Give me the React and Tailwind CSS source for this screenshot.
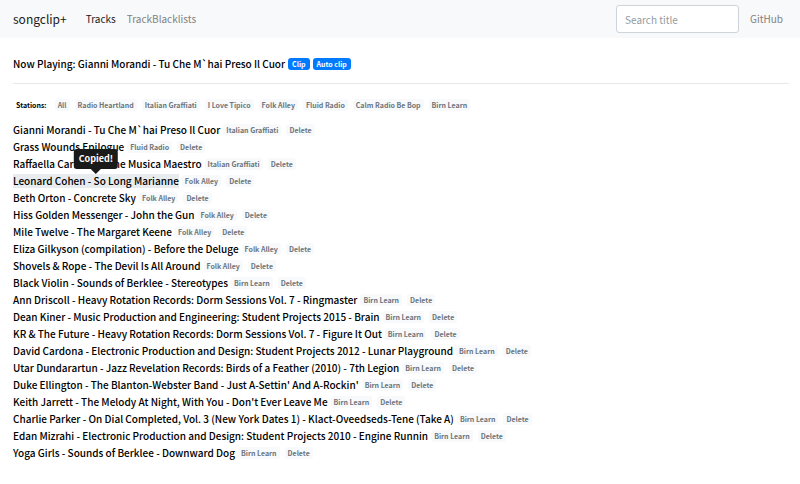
const stations = ["All", "Radio Heartland", "Italian Graffiati", "I Love Tipico", "Folk Alley", "Fluid Radio", "Calm Radio Be Bop", "Birn Learn"];

const tracks = [
  ["Gianni Morandi - Tu Che M`hai Preso Il Cuor", "Italian Graffiati"],
  ["Grass Wounds Epilogue", "Fluid Radio"],
  ["Raffaella Carrà - Ma Che Musica Maestro", "Italian Graffiati"],
  ["Leonard Cohen - So Long Marianne", "Folk Alley"],
  ["Beth Orton - Concrete Sky", "Folk Alley"],
  ["Hiss Golden Messenger - John the Gun", "Folk Alley"],
  ["Mile Twelve - The Margaret Keene", "Folk Alley"],
  ["Eliza Gilkyson (compilation) - Before the Deluge", "Folk Alley"],
  ["Shovels & Rope - The Devil Is All Around", "Folk Alley"],
  ["Black Violin - Sounds of Berklee - Stereotypes", "Birn Learn"],
  ["Ann Driscoll - Heavy Rotation Records: Dorm Sessions Vol. 7 - Ringmaster", "Birn Learn"],
  ["Dean Kiner - Music Production and Engineering: Student Projects 2015 - Brain", "Birn Learn"],
  ["KR & The Future - Heavy Rotation Records: Dorm Sessions Vol. 7 - Figure It Out", "Birn Learn"],
  ["David Cardona - Electronic Production and Design: Student Projects 2012 - Lunar Playground", "Birn Learn"],
  ["Utar Dundarartun - Jazz Revelation Records: Birds of a Feather (2010) - 7th Legion", "Birn Learn"],
  ["Duke Ellington - The Blanton-Webster Band - Just A-Settin' And A-Rockin'", "Birn Learn"],
  ["Keith Jarrett - The Melody At Night, With You - Don't Ever Leave Me", "Birn Learn"],
  ["Charlie Parker - On Dial Completed, Vol. 3 (New York Dates 1) - Klact-Oveedseds-Tene (Take A)", "Birn Learn"],
  ["Edan Mizrahi - Electronic Production and Design: Student Projects 2010 - Engine Runnin", "Birn Learn"],
  ["Yoga Girls - Sounds of Berklee - Downward Dog", "Birn Learn"],
];

const copiedIndex = 3;

function Tag({ children }) {
  return (
    <button type="button" className="rounded-[3px] bg-[#f8f9fa] px-[3px] text-[7px] leading-[12px] font-bold text-[#6c757d]">
      {children}
    </button>
  );
}

function Action({ children }) {
  return (
    <button type="button" className="rounded-[3px] bg-[#007bff] px-1 text-[7px] leading-[12px] font-bold text-white">
      {children}
    </button>
  );
}

function Track({ title, station, copied }) {
  return (
    <li className="flex h-[17px] items-center gap-[3px]">
      <button type="button" className={copied ? "relative bg-[#e9ecef] leading-[14px]" : "leading-[14px]"}>
        {title}
        {copied && (
          <span role="tooltip" className="absolute bottom-full left-1/2 flex -translate-x-1/2 flex-col items-center">
            <span className="rounded-[3px] bg-[#1a1a1a] px-[5px] text-[9px] leading-[20px] font-bold text-white">Copied!</span>
            <span className="border-x-[5px] border-t-[5px] border-x-transparent border-t-[#1a1a1a]" />
          </span>
        )}
      </button>
      <span className="flex gap-[5px] pt-px">
        <Tag>{station}</Tag>
        <Tag>Delete</Tag>
      </span>
    </li>
  );
}

export default function App() {
  return (
    <div className="min-h-screen bg-white font-['Noto_Sans_CJK_SC',sans-serif] text-[10px] font-medium text-black">
      <nav className="flex items-center bg-[#f8f9fa] px-[13px] py-[5px] font-normal">
        <a href="#home" className="text-[12px] leading-[20px] text-[#1a1a1a]">songclip+</a>
        <a href="#tracks" className="ml-[19px] leading-[18px] text-[#1a1a1a]">Tracks</a>
        <a href="#blacklists" className="ml-[11px] leading-[18px] text-[#808182]">TrackBlacklists</a>
        <input
          type="search"
          aria-label="Search title"
          placeholder="Search title"
          className="ml-auto h-7 w-[123px] rounded-[3px] border border-[#ced4da] bg-white px-2 outline-none placeholder:text-[#939ba2]"
        />
        <a href="#github" className="ml-[11px] mr-1 leading-[18px] text-[#808182]">GitHub</a>
      </nav>
      <main className="pr-[11px] pl-[13px]">
        <section className="mt-[17px] flex items-center gap-[3px] border-b border-[#e8e8e8] pb-[10px]">
          <h1 className="leading-[18px]">Now Playing: Gianni Morandi - Tu Che M`hai Preso Il Cuor</h1>
          <Action>Clip</Action>
          <Action>Auto clip</Action>
        </section>
        <section className="mt-[15px] flex items-center gap-[5px]">
          <h2 className="px-[3px] text-[7px] leading-[12px] font-bold">Stations:</h2>
          {stations.map((name) => (
            <Tag key={name}>{name}</Tag>
          ))}
        </section>
        <ul className="mt-[10px]">
          {tracks.map(([title, station], i) => (
            <Track key={title} title={title} station={station} copied={i === copiedIndex} />
          ))}
        </ul>
      </main>
    </div>
  );
}
